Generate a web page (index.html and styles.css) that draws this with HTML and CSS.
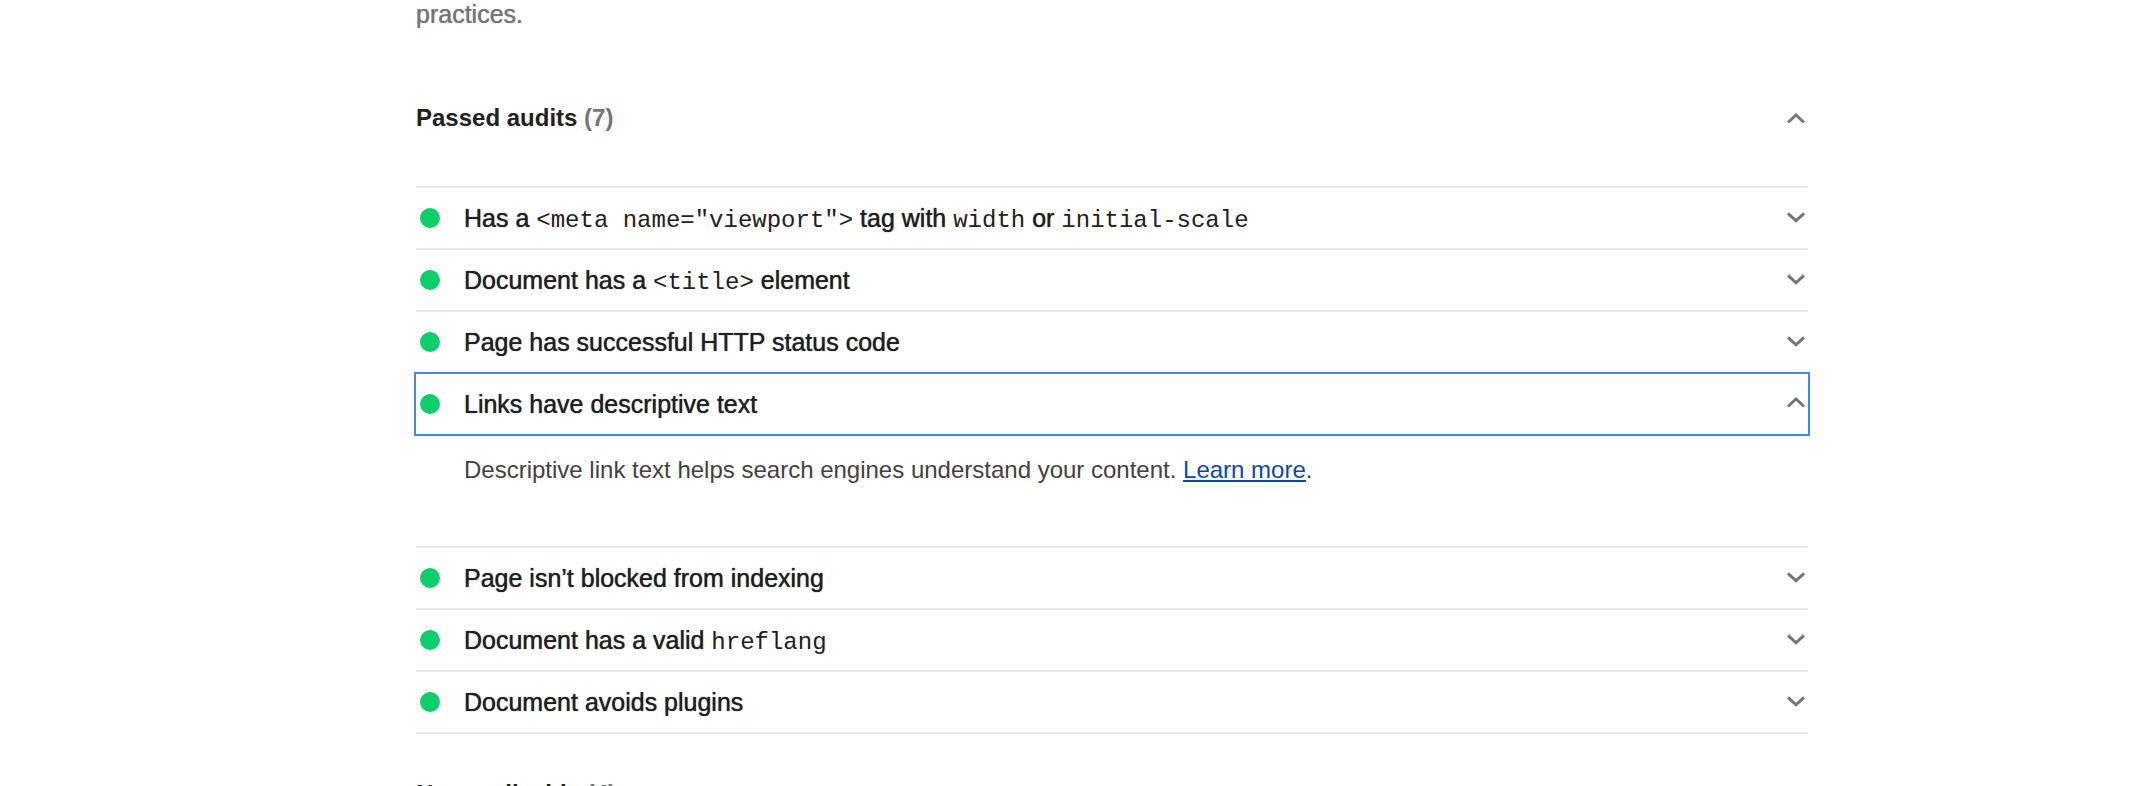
FILE: index.html
```html
<!DOCTYPE html>
<html lang="en">
<head>
<meta charset="utf-8">
<title>Audit report</title>
<link rel="stylesheet" href="styles.css">
</head>
<body>
<main class="report">
  <p class="category-note">practices.</p>

  <section class="clump">
    <button class="clump-header" type="button" aria-expanded="true">
      <span class="clump-title">Passed audits <span class="clump-count">(7)</span></span>
      <svg class="chevron" viewBox="0 0 20 12" aria-hidden="true"><path d="M2 10.500 10 3 18 10.500"/></svg>
    </button>
    <ul class="audits">
      <li class="audit">
        <button class="audit-header" type="button" aria-expanded="false">
          <span class="dot"></span>
          <span class="audit-title">Has a <code>&lt;meta name="viewport"&gt;</code> tag with <code>width</code> or <code>initial-scale</code></span>
          <svg class="chevron" viewBox="0 0 20 12" aria-hidden="true"><path d="M2 1.300 10 8.800 18 1.300"/></svg>
        </button>
      </li>
      <li class="audit">
        <button class="audit-header" type="button" aria-expanded="false">
          <span class="dot"></span>
          <span class="audit-title">Document has a <code>&lt;title&gt;</code> element</span>
          <svg class="chevron" viewBox="0 0 20 12" aria-hidden="true"><path d="M2 1.300 10 8.800 18 1.300"/></svg>
        </button>
      </li>
      <li class="audit">
        <button class="audit-header" type="button" aria-expanded="false">
          <span class="dot"></span>
          <span class="audit-title">Page has successful HTTP status code</span>
          <svg class="chevron" viewBox="0 0 20 12" aria-hidden="true"><path d="M2 1.300 10 8.800 18 1.300"/></svg>
        </button>
      </li>
      <li class="audit">
        <button class="audit-header is-focused" type="button" aria-expanded="true" aria-controls="links-description">
          <span class="dot"></span>
          <span class="audit-title">Links have descriptive text</span>
          <svg class="chevron" viewBox="0 0 20 12" aria-hidden="true"><path d="M2 8.500 10 1 18 8.500"/></svg>
        </button>
        <p class="audit-description" id="links-description">Descriptive link text helps search engines understand your content. <a href="#">Learn more</a>.</p>
      </li>
      <li class="audit">
        <button class="audit-header" type="button" aria-expanded="false">
          <span class="dot"></span>
          <span class="audit-title">Page isn’t blocked from indexing</span>
          <svg class="chevron" viewBox="0 0 20 12" aria-hidden="true"><path d="M2 1.300 10 8.800 18 1.300"/></svg>
        </button>
      </li>
      <li class="audit">
        <button class="audit-header" type="button" aria-expanded="false">
          <span class="dot"></span>
          <span class="audit-title">Document has a valid <code>hreflang</code></span>
          <svg class="chevron" viewBox="0 0 20 12" aria-hidden="true"><path d="M2 1.300 10 8.800 18 1.300"/></svg>
        </button>
      </li>
      <li class="audit">
        <button class="audit-header" type="button" aria-expanded="false">
          <span class="dot"></span>
          <span class="audit-title">Document avoids plugins</span>
          <svg class="chevron" viewBox="0 0 20 12" aria-hidden="true"><path d="M2 1.300 10 8.800 18 1.300"/></svg>
        </button>
      </li>
    </ul>
  </section>

  <section class="clump">
    <button class="clump-header" type="button" aria-expanded="false">
      <span class="clump-title">Not applicable <span class="clump-count">(4)</span></span>
      <svg class="chevron" viewBox="0 0 20 12" aria-hidden="true"><path d="M2 1.300 10 8.800 18 1.300"/></svg>
    </button>
  </section>
</main>
</body>
</html>
```

FILE: styles.css
```css
* {
  box-sizing: border-box;
}

html {
  height: 100%;
  overflow: hidden;
}

body {
  margin: 0;
  padding-left: 74px;
  height: 100%;
  overflow: hidden;
  background: #fff;
  color: #212121;
  font-family: "Liberation Sans", Arial, sans-serif;
  font-size: 24px;
  line-height: 32px;
}

.report {
  max-width: 1392px;
  margin: 0 auto;
}

.category-note {
  margin: 0 0 42px;
  font-size: 25px;
  line-height: 28px;
  color: #757575;
  text-shadow: 0 0 1px currentColor;
}

button {
  border: 0;
  margin: 0;
  padding: 0;
  width: 100%;
  background: none;
  color: inherit;
  font: inherit;
  text-align: left;
}

.clump-header {
  display: flex;
  align-items: center;
  justify-content: space-between;
  height: 96px;
}

.clump-title {
  font-weight: 700;
}

.clump-count {
  color: #757575;
}

.chevron {
  flex: none;
  width: 20px;
  height: 12px;
  margin-right: 2px;
  overflow: visible;
  fill: none;
  stroke: #757575;
  stroke-width: 3;
}

.audits {
  list-style: none;
  margin: 20px 0 12px;
  padding: 0;
  border-bottom: 2px solid #ebebeb;
}

.audit {
  border-top: 2px solid #ebebeb;
}

.audit-header {
  display: flex;
  align-items: center;
  height: 60px;
}

.is-focused {
  outline: 2px solid #4285f4;
}

.dot {
  flex: none;
  width: 20px;
  height: 20px;
  margin: 0 24px 0 4px;
  border-radius: 50%;
  background: #0cce6b;
}

.audit-title {
  flex: 1;
  font-size: 25px;
  text-shadow: 0 0 1px currentColor;
}

.audit-title code {
  font-family: "Liberation Mono", "Courier New", monospace;
  font-size: 24px;
  line-height: 24px;
  text-shadow: none;
}

.audit-description {
  margin: 0;
  padding: 20px 48px 60px;
  color: #424242;
}

.audit-description a {
  color: #0d47a1;
}
```
